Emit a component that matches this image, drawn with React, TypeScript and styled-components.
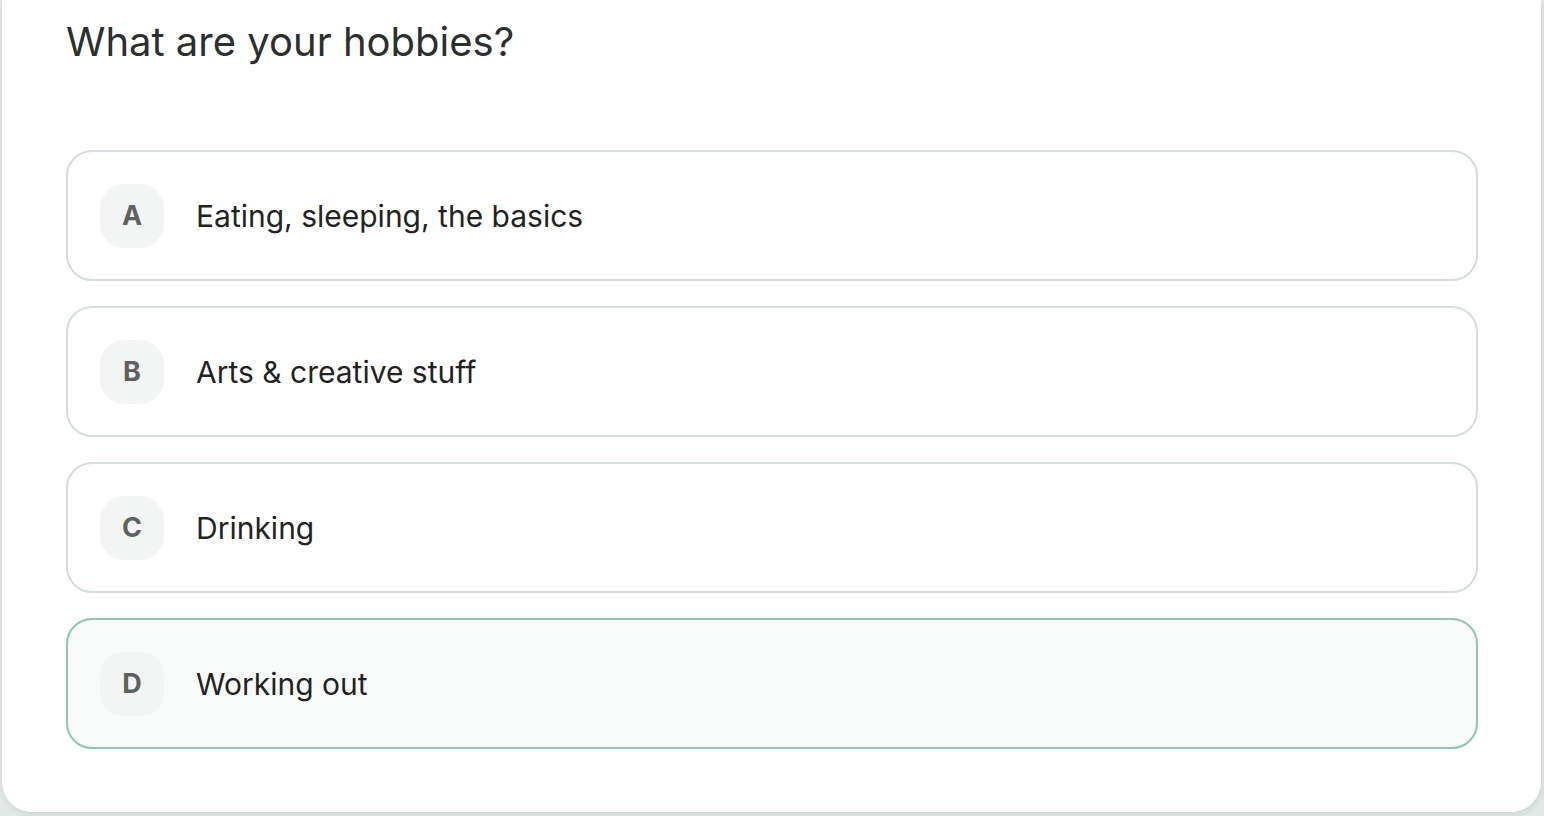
import React from "react";
import styled, { createGlobalStyle } from "styled-components";

const GlobalStyle = createGlobalStyle`
  html, body {
    margin: 0;
    padding: 0;
    background: #e1e8e5;
    font-family: Inter, "Noto Sans", sans-serif;
  }
  #root {
    height: 816px;
    overflow: hidden;
  }
`;

const Card = styled.main`
  box-sizing: border-box;
  height: 812px;
  margin: 0 3px 0 2px;
  padding: 16px 64px 0 64px;
  background: #ffffff;
  border-radius: 0 0 30px 30px;
  box-shadow: 1px 2px 6px rgba(60, 80, 72, 0.12);
`;

const Title = styled.h1`
  margin: 0 0 82px 0;
  font-size: 40px;
  font-weight: 400;
  line-height: 52px;
  color: #2b302e;
  letter-spacing: 0;
`;

const Options = styled.div`
  display: flex;
  flex-direction: column;
  gap: 25px;
`;

const Option = styled.button<{ $selected?: boolean }>`
  display: flex;
  align-items: center;
  gap: 32px;
  box-sizing: border-box;
  width: 1412px;
  height: 131px;
  padding: 0 32px;
  border: 2px solid ${(p) => (p.$selected ? "#8ec6b3" : "#d4dedb")};
  border-radius: 26px;
  background: ${(p) => (p.$selected ? "#f8faf9" : "#ffffff")};
  font-family: inherit;
  text-align: left;
  cursor: pointer;
`;

const Badge = styled.span`
  display: flex;
  align-items: center;
  justify-content: center;
  width: 64px;
  height: 64px;
  flex-shrink: 0;
  border-radius: 24px;
  background: #f2f5f4;
  font-size: 27px;
  font-weight: 700;
  color: #5c625f;
`;

const Label = styled.span`
  font-size: 30px;
  font-weight: 400;
  color: #1f2422;
`;

const options = [
  { key: "A", text: "Eating, sleeping, the basics" },
  { key: "B", text: "Arts & creative stuff" },
  { key: "C", text: "Drinking" },
  { key: "D", text: "Working out", selected: true },
];

export default function App() {
  return (
    <>
      <GlobalStyle />
      <Card>
        <Title>What are your hobbies?</Title>
        <Options>
          {options.map((o) => (
            <Option key={o.key} $selected={o.selected}>
              <Badge>{o.key}</Badge>
              <Label>{o.text}</Label>
            </Option>
          ))}
        </Options>
      </Card>
    </>
  );
}
